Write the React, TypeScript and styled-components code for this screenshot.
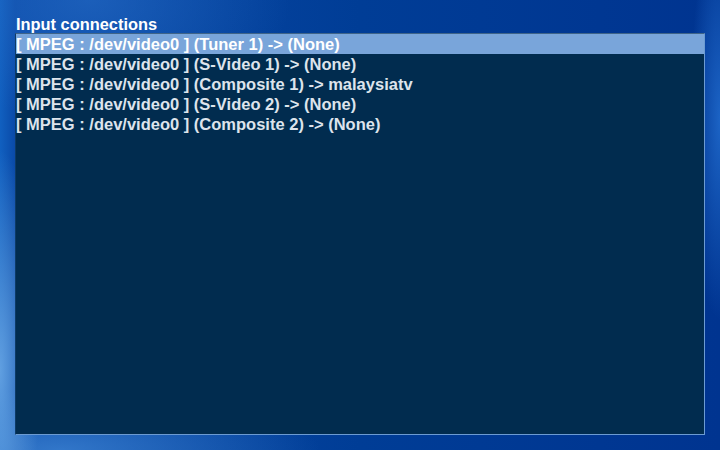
import React from "react";
import styled, { createGlobalStyle } from "styled-components";

const GlobalStyle = createGlobalStyle`
  html, body {
    margin: 0;
    padding: 0;
    width: 720px;
    height: 450px;
    overflow: hidden;
  }
  body {
    font-family: "Liberation Sans", Arial, sans-serif;
  }
`;

const Screen = styled.div`
  width: 720px;
  height: 450px;
  box-sizing: border-box;
  padding: 15px 15px 15px 15px;
  display: flex;
  flex-direction: column;
  background:
    radial-gradient(ellipse 40px 220px at 0px 370px, rgba(110, 170, 230, 0.85), rgba(110, 170, 230, 0) 100%),
    radial-gradient(ellipse 260px 60px at 60px 450px, rgba(60, 130, 210, 0.8), rgba(60, 130, 210, 0) 100%),
    radial-gradient(ellipse 30px 200px at 720px 120px, rgba(40, 120, 220, 0.7), rgba(40, 120, 220, 0) 100%),
    radial-gradient(ellipse 200px 120px at 90px 0px, rgba(40, 110, 200, 0.6), rgba(40, 110, 200, 0) 100%),
    linear-gradient(90deg, #1160c0 0px, #0a4aa8 15px, #003d96 50%, #003490 100%);
`;

const Title = styled.div`
  font-size: 16.4px;
  font-weight: bold;
  color: #ffffff;
  line-height: 18px;
  padding-left: 1px;
`;

const ListPanel = styled.div`
  flex: 1;
  background: #012c4f;
  border-top: 1px solid #3f6488;
  border-left: 1px solid #0d3a66;
  border-right: 1px solid #6c9bd2;
  border-bottom: 1px solid #6c9bd2;
  display: flex;
  flex-direction: column;
`;

const Row = styled.div<{ $selected?: boolean }>`
  height: 20px;
  line-height: 20px;
  padding-left: 0;
  font-size: 16.5px;
  font-weight: bold;
  white-space: nowrap;
  color: ${(p) => (p.$selected ? "#ffffff" : "#dde4ec")};
  background: ${(p) => (p.$selected ? "#79a5da" : "transparent")};
`;

const connections = [
  "[ MPEG : /dev/video0 ] (Tuner 1) -> (None)",
  "[ MPEG : /dev/video0 ] (S-Video 1) -> (None)",
  "[ MPEG : /dev/video0 ] (Composite 1) -> malaysiatv",
  "[ MPEG : /dev/video0 ] (S-Video 2) -> (None)",
  "[ MPEG : /dev/video0 ] (Composite 2) -> (None)",
];

const App = () => {
  return (
    <>
      <GlobalStyle />
      <Screen>
        <Title>Input connections</Title>
        <ListPanel>
          {connections.map((c, i) => (
            <Row key={c} $selected={i === 0}>
              {c}
            </Row>
          ))}
        </ListPanel>
      </Screen>
    </>
  );
};

export default App;
